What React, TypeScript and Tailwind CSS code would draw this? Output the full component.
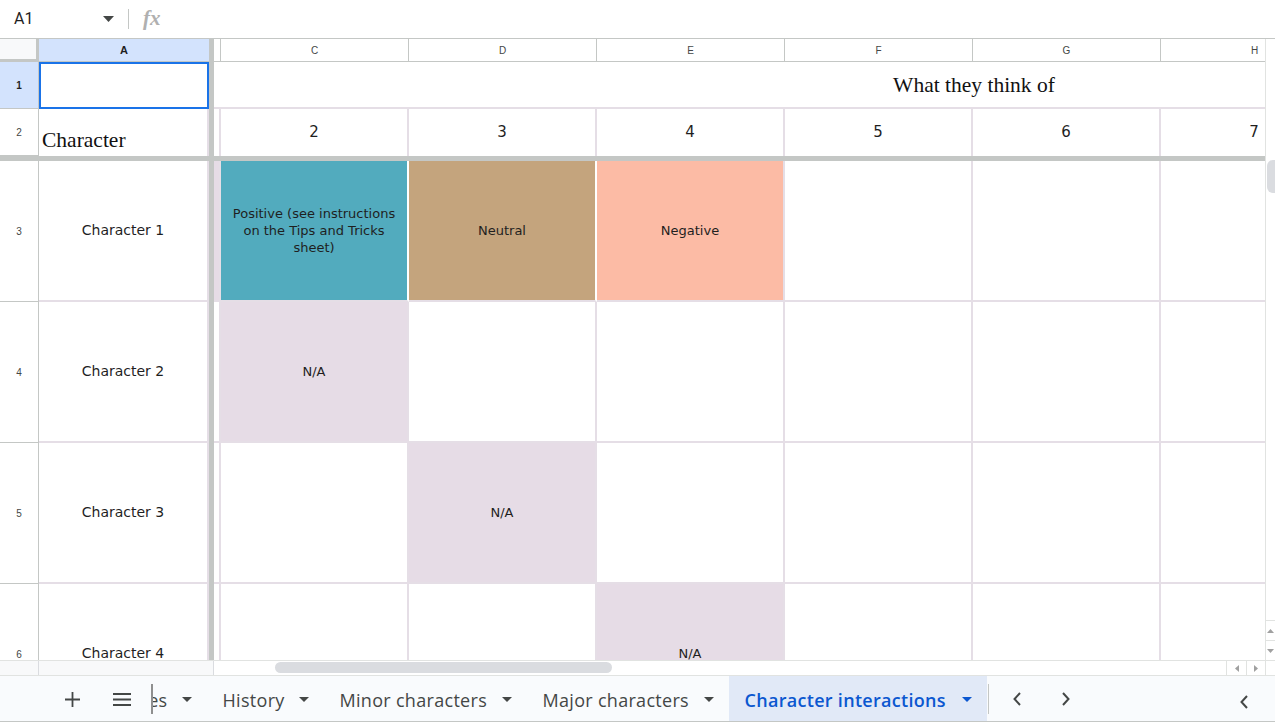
import React from "react";

type Cell = { bg?: string; text?: string; border?: string };

const TEAL = "bg-[#52abbe]";
const TAN = "bg-[#c4a47d]";
const SALMON = "bg-[#fcbba5]";
const NA = "bg-[#e6dce6]";

const rows: { n: number; name: string; b: boolean; cells: Cell[] }[] = [
  {
    n: 3,
    name: "Character 1",
    b: true,
    cells: [
      { bg: TEAL, text: "Positive (see instructions on the Tips and Tricks sheet)", border: "border-r-white" },
      { bg: TAN, text: "Neutral", border: "border-r-white" },
      { bg: SALMON, text: "Negative" },
      {},
      {},
      {},
    ],
  },
  { n: 4, name: "Character 2", b: false, cells: [{ bg: NA, text: "N/A" }, {}, {}, {}, {}, {}] },
  { n: 5, name: "Character 3", b: false, cells: [{}, { bg: NA, text: "N/A" }, {}, {}, {}, {}] },
  { n: 6, name: "Character 4", b: false, cells: [{}, {}, { bg: NA, text: "N/A" }, {}, {}, {}] },
];

const colLetters = ["C", "D", "E", "F", "G", "H"];

function Caret({ color = "#444746" }: { color?: string }) {
  return (
    <svg width="10" height="5" viewBox="0 0 10 5" className="shrink-0">
      <path d="M0 0h10L5 5z" fill={color} />
    </svg>
  );
}

function ChevLeft() {
  return (
    <svg width="10" height="16" viewBox="0 0 10 16">
      <path d="M8 2L2.5 8L8 14" stroke="#444746" strokeWidth="2" fill="none" />
    </svg>
  );
}
function ChevRight() {
  return (
    <svg width="10" height="16" viewBox="0 0 10 16">
      <path d="M2 2L7.5 8L2 14" stroke="#444746" strokeWidth="2" fill="none" />
    </svg>
  );
}

function Tab({ label, w, active }: { label: string; w: string; active?: boolean }) {
  return (
    <div
      className={
        "h-full flex items-center pl-[16px] pr-[15px] shrink-0 " + (active ? "bg-[#e1e9f7]" : "")
      }
    >
      <span
        className={
          "whitespace-nowrap text-[18px] tracking-[0.3px] pt-[3px] " +
          w +
          (active ? " text-[#0b57d0] font-semibold" : " text-[#444746] font-medium")
        }
      >
        {label}
      </span>
      <span className="ml-[14px] flex pt-[2px]">
        <Caret color={active ? "#0b57d0" : "#444746"} />
      </span>
    </div>
  );
}

export default function App() {
  const hdr = "font-['Liberation_Sans',Arial,sans-serif]";
  const cellFont = "font-['DejaVu_Sans',sans-serif]";
  const serif = "font-['Liberation_Serif','Times_New_Roman',serif]";
  return (
    <div className={"w-[1275px] h-[722px] overflow-hidden bg-white flex flex-col " + hdr}>
      {/* formula bar */}
      <div className="h-[39px] shrink-0 flex items-center border-b border-[#c4c7c5] bg-white">
        <div className="w-[128px] flex items-center justify-between pl-[14px] pr-[14px]">
          <span className="text-[16px] text-[#1f1f1f] font-['Roboto',sans-serif]">A1</span>
          <svg width="11" height="6" viewBox="0 0 11 6">
            <path d="M0 0h11L5.5 6z" fill="#444746" />
          </svg>
        </div>
        <div className="w-px h-[20px] bg-[#c4c7c5]" />
        <span className={"ml-[14px] italic font-bold text-[21px] text-[#b0b0b0] " + serif}>fx</span>
      </div>

      {/* grid */}
      <div className="h-[621px] shrink-0 flex">
        <div className="flex-1 overflow-hidden flex flex-col">
          {/* column header */}
          <div className="h-[23px] shrink-0 flex">
            <div className="w-[39px] shrink-0 h-full bg-[#f8f9fa] border-r-[3px] border-b-[3px] border-[#c4c7c5]" />
            <div className="w-[170px] shrink-0 h-full bg-[#d3e3fd] border-b border-[#c4c7c5] flex items-center justify-center text-[11px] font-bold text-[#1f1f1f]">
              A
            </div>
            <div className="w-[5px] shrink-0 h-full bg-[#c4c7c5]" />
            <div className="w-[7px] shrink-0 h-full border-r border-b border-[#c4c7c5]" />
            {colLetters.map((c) => (
              <div
                key={c}
                className="w-[188px] shrink-0 h-full border-r border-b border-[#c4c7c5] flex items-center justify-center text-[10px] text-[#444746]"
              >
                {c}
              </div>
            ))}
          </div>

          {/* row 1 */}
          <div className="h-[47px] shrink-0 flex">
            <div className="w-[39px] shrink-0 h-full bg-[#d3e3fd] border-r border-b border-[#c4c7c5] flex items-center justify-center text-[10px] font-bold text-[#1f1f1f]">
              1
            </div>
            <div className="w-[170px] shrink-0 h-full border-2 border-[#1a73e8]" />
            <div className="w-[5px] shrink-0 h-full bg-[#c4c7c5]" />
            <div className="w-[1520px] shrink-0 h-full border-b-2 border-[#e5dee6] flex items-center justify-center pt-[2px]">
              <span className={"text-[21.5px] text-[#111] " + serif}>What they think of</span>
            </div>
          </div>

          {/* row 2 */}
          <div className="h-[47px] shrink-0 flex">
            <div className="w-[39px] shrink-0 h-full border-r border-b border-[#c4c7c5] flex items-center justify-center text-[10px] text-[#444746]">
              2
            </div>
            <div className="w-[170px] shrink-0 h-full border-r-2 border-[#e5dee6] flex items-end pl-[3px] pb-[4px]">
              <span className={"text-[21.5px] leading-[24px] text-[#111] " + serif}>Character</span>
            </div>
            <div className="w-[5px] shrink-0 h-full bg-[#c4c7c5]" />
            <div className="w-[7px] shrink-0 h-full border-r-2 border-[#e5dee6]" />
            {[2, 3, 4, 5, 6, 7].map((n) => (
              <div
                key={n}
                className={
                  "w-[188px] shrink-0 h-full border-r-2 border-[#e5dee6] flex items-center justify-center text-[15px] text-[#1f1f1f] " +
                  cellFont
                }
              >
                {n}
              </div>
            ))}
          </div>

          {/* frozen divider */}
          <div className="h-[5px] shrink-0 bg-[#c4c7c5]" />

          {rows.map((r) => (
            <div key={r.n} className="h-[141px] shrink-0 flex">
              <div className="w-[39px] shrink-0 h-full border-r border-b border-[#c4c7c5] flex items-center justify-center text-[10px] text-[#444746]">
                {r.n}
              </div>
              <div
                className={
                  "w-[170px] shrink-0 h-full border-r-2 border-b-2 border-[#e5dee6] flex items-center justify-center text-[14px] text-[#1f1f1f] " +
                  cellFont
                }
              >
                {r.name}
              </div>
              <div className="w-[5px] shrink-0 h-full bg-[#c4c7c5]" />
              <div
                className={
                  "w-[7px] shrink-0 h-full border-r-2 border-b-2 border-[#e5dee6] " + (r.b ? NA : "")
                }
              />
              {r.cells.map((c, i) => (
                <div
                  key={i}
                  className={
                    "w-[188px] shrink-0 h-full border-r-2 border-b-2 border-[#e5dee6] flex items-center justify-center text-center px-[8px] text-[13px] leading-[17px] text-[#1f1f1f] " +
                    cellFont +
                    " " +
                    (c.bg || "") +
                    " " +
                    (c.border || "")
                  }
                >
                  {c.text}
                </div>
              ))}
            </div>
          ))}
        </div>

        {/* vertical scrollbar */}
        <div className="w-[10px] shrink-0 h-full border-l border-[#e1e3e1] bg-white flex flex-col">
          <div className="h-[121px] shrink-0" />
          <div className="h-[33px] shrink-0 ml-[1px] rounded-l-[6px] bg-[#dadce0]" />
          <div className="flex-1" />
          <div className="h-[20px] shrink-0 border-t border-[#e1e3e1] flex items-center justify-center">
            <svg width="7" height="4" viewBox="0 0 7 4">
              <path d="M0 4h7L3.5 0z" fill="#a0a0a0" />
            </svg>
          </div>
          <div className="h-[20px] shrink-0 border-t border-[#e1e3e1] flex items-center justify-center">
            <svg width="7" height="4" viewBox="0 0 7 4">
              <path d="M0 0h7L3.5 4z" fill="#a0a0a0" />
            </svg>
          </div>
        </div>
      </div>

      {/* horizontal scroll strip */}
      <div className="h-[15px] shrink-0 flex border-t border-[#e1e3e1] bg-white">
        <div className="w-[39px] shrink-0 h-full bg-[#f8f9fa] border-r border-[#dadce0]" />
        <div className="w-[175px] shrink-0 h-full bg-[#f8f9fa] border-r border-[#dadce0]" />
        <div className="flex-1 flex items-start pt-[1px]">
          <div className="ml-[61px] w-[337px] h-[11px] rounded-full bg-[#dadce0]" />
        </div>
        <div className="w-[20px] shrink-0 h-full border-l border-[#e1e3e1] flex items-center justify-center">
          <svg width="4" height="7" viewBox="0 0 4 7">
            <path d="M4 0v7L0 3.5z" fill="#a0a0a0" />
          </svg>
        </div>
        <div className="w-[19px] shrink-0 h-full border-l border-[#e1e3e1] flex items-center justify-center">
          <svg width="4" height="7" viewBox="0 0 4 7">
            <path d="M0 0v7L4 3.5z" fill="#a0a0a0" />
          </svg>
        </div>
        <div className="w-[10px] shrink-0 h-full border-l border-[#e1e3e1]" />
      </div>

      {/* sheet tabs */}
      <div className="h-[47px] shrink-0 flex items-center bg-[#f9fbfd] border-t border-[#e1e3e1] border-b border-b-[#c4c7c5] font-['Open_Sans',sans-serif]">
        <div className="ml-[52px] w-[40px] h-full flex items-center justify-center shrink-0 pt-[2px]">
          <svg width="15" height="15" viewBox="0 0 15 15">
            <path d="M7.5 0v15M0 7.5h15" stroke="#444746" strokeWidth="1.8" />
          </svg>
        </div>
        <div className="ml-[10px] w-[40px] h-full flex items-center justify-center shrink-0 pt-[2px]">
          <svg width="18" height="13" viewBox="0 0 18 13">
            <path d="M0 1h18M0 6.5h18M0 12h18" stroke="#444746" strokeWidth="1.8" />
          </svg>
        </div>
        <div className="ml-[9px] w-[1.5px] h-[30px] bg-[#8f8f8f] shrink-0" />
        <div className="h-full flex items-center pr-[15px] shrink-0">
          <div className="w-[15px] overflow-hidden flex justify-end pt-[3px]">
            <span className="whitespace-nowrap text-[18px] tracking-[0.3px] font-medium text-[#444746]">Notes</span>
          </div>
          <span className="ml-[14px] flex pt-[2px]">
            <Caret />
          </span>
        </div>
        <Tab label="History" w="w-[62px]" />
        <Tab label="Minor characters" w="w-[148px]" />
        <Tab label="Major characters" w="w-[147px]" />
        <Tab label="Character interactions" w="w-[203px]" active />
        <div className="ml-[1px] w-px h-[30px] bg-[#c4c7c5] shrink-0" />
        <div className="ml-[8px] w-[40px] h-full flex items-center justify-center shrink-0">
          <ChevLeft />
        </div>
        <div className="ml-[9px] w-[40px] h-full flex items-center justify-center shrink-0">
          <ChevRight />
        </div>
        <div className="ml-auto mr-[11px] w-[40px] h-full flex items-center justify-center pt-[6px] shrink-0">
          <ChevLeft />
        </div>
      </div>
    </div>
  );
}
